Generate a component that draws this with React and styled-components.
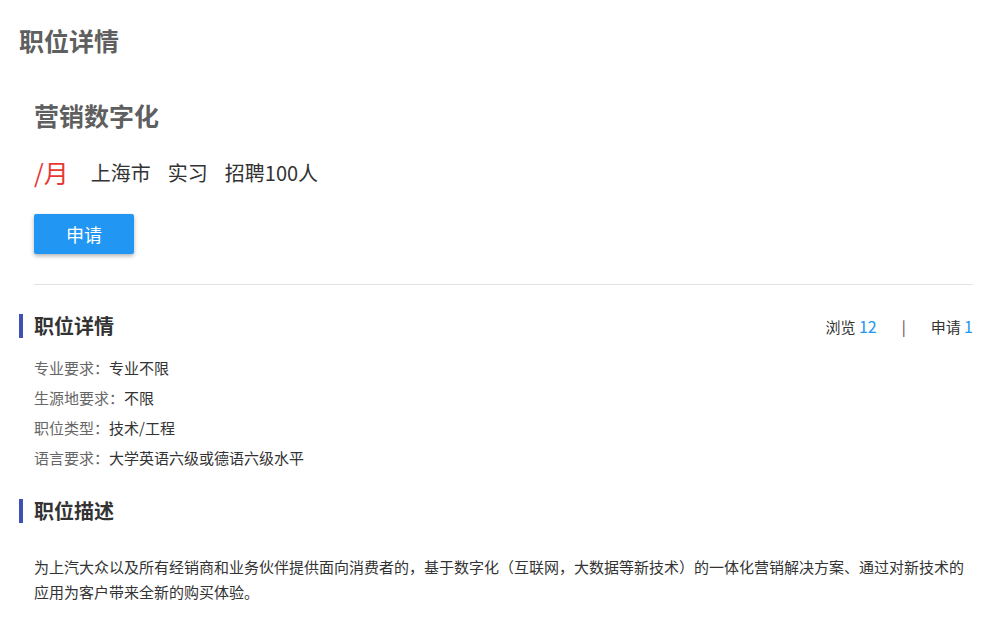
import React from "react";
import styled, { createGlobalStyle } from "styled-components";

const GlobalStyle = createGlobalStyle`
	body {
		margin: 0;
		background: #ffffff;
		font-family: "Noto Sans CJK SC", "Noto Sans", sans-serif;
	}
`;

const details = [
	{ label: "专业要求：", value: "专业不限" },
	{ label: "生源地要求：", value: "不限" },
	{ label: "职位类型：", value: "技术/工程" },
	{ label: "语言要求：", value: "大学英语六级或德语六级水平" },
];

const App = () => {
	return (
		<Page>
			<GlobalStyle />
			<PageTitle>职位详情</PageTitle>
			<Card>
				<JobTitle>营销数字化</JobTitle>
				<MetaRow>
					<Salary>/月</Salary>
					<MetaItem>上海市</MetaItem>
					<MetaItem>实习</MetaItem>
					<MetaItem>招聘100人</MetaItem>
				</MetaRow>
				<ApplyButton>申请</ApplyButton>
				<Divider />
			</Card>

			<SectionHead>
				<SectionTitle>职位详情</SectionTitle>
				<Stats>
					<span>
						浏览 <Num>12</Num>
					</span>
					<Sep>|</Sep>
					<span>
						申请 <Num>1</Num>
					</span>
				</Stats>
			</SectionHead>
			<DetailList>
				{details.map((d) => (
					<DetailRow key={d.label}>
						<Label>{d.label}</Label>
						<Value>{d.value}</Value>
					</DetailRow>
				))}
			</DetailList>

			<SectionHead $space={26}>
				<SectionTitle>职位描述</SectionTitle>
			</SectionHead>
			<Description>
				为上汽大众以及所有经销商和业务伙伴提供面向消费者的，基于数字化（互联网，大数据等新技术）的一体化营销解决方案、通过对新技术的应用为客户带来全新的购买体验。
			</Description>
		</Page>
	);
};

export default App;

const Page = styled.div`
	padding: 25px 24px 30px 19px;
	color: #333333;
`;

const PageTitle = styled.h2`
	margin: 0;
	font-size: 25px;
	line-height: 30px;
	font-weight: 700;
	color: #5f5f5f;
`;

const Card = styled.div`
	padding-left: 15px;
`;

const JobTitle = styled.h3`
	margin: 45px 0 0;
	font-size: 25px;
	line-height: 30px;
	font-weight: 700;
	color: #5f5f5f;
`;

const MetaRow = styled.div`
	margin-top: 27px;
	display: flex;
	align-items: center;
	gap: 17px;
	height: 30px;
`;

const Salary = styled.span`
	font-size: 25px;
	color: #e53935;
	margin-right: 5px;
`;

const MetaItem = styled.span`
	font-size: 20px;
	color: #333333;
`;

const ApplyButton = styled.button`
	margin-top: 27px;
	width: 100px;
	height: 40px;
	border: none;
	border-radius: 2px;
	background: #2196f3;
	color: #ffffff;
	font-family: inherit;
	font-size: 18px;
	box-shadow: 0 2px 4px rgba(0, 0, 0, 0.3);
	cursor: pointer;
	display: block;
`;

const Divider = styled.div`
	margin-top: 30px;
	height: 1px;
	background: #e3e3e3;
`;

const SectionHead = styled.div`
	margin-top: ${(p) => p.$space || 29}px;
	display: flex;
	align-items: center;
	justify-content: space-between;
	border-left: 4px solid #3f51b5;
	padding-left: 11px;
	height: 24px;
`;

const SectionTitle = styled.h4`
	margin: 0;
	font-size: 20px;
	line-height: 24px;
	font-weight: 700;
	color: #333333;
`;

const Stats = styled.div`
	display: flex;
	align-items: center;
	gap: 22px;
	font-size: 15px;
	color: #333333;
`;

const Num = styled.span`
	color: #2196f3;
	font-size: 16px;
`;

const Sep = styled.span`
	color: #6a3a4a;
	margin: 0 3px;
`;

const DetailList = styled.div`
	margin-top: 15px;
	padding-left: 15px;
`;

const DetailRow = styled.div`
	font-size: 15px;
	line-height: 30px;
`;

const Label = styled.span`
	color: #666666;
`;

const Value = styled.span`
	color: #333333;
`;

const Description = styled.p`
	margin: 31px 0 0;
	padding-left: 15px;
	font-size: 15px;
	line-height: 25px;
	color: #333333;
`;
